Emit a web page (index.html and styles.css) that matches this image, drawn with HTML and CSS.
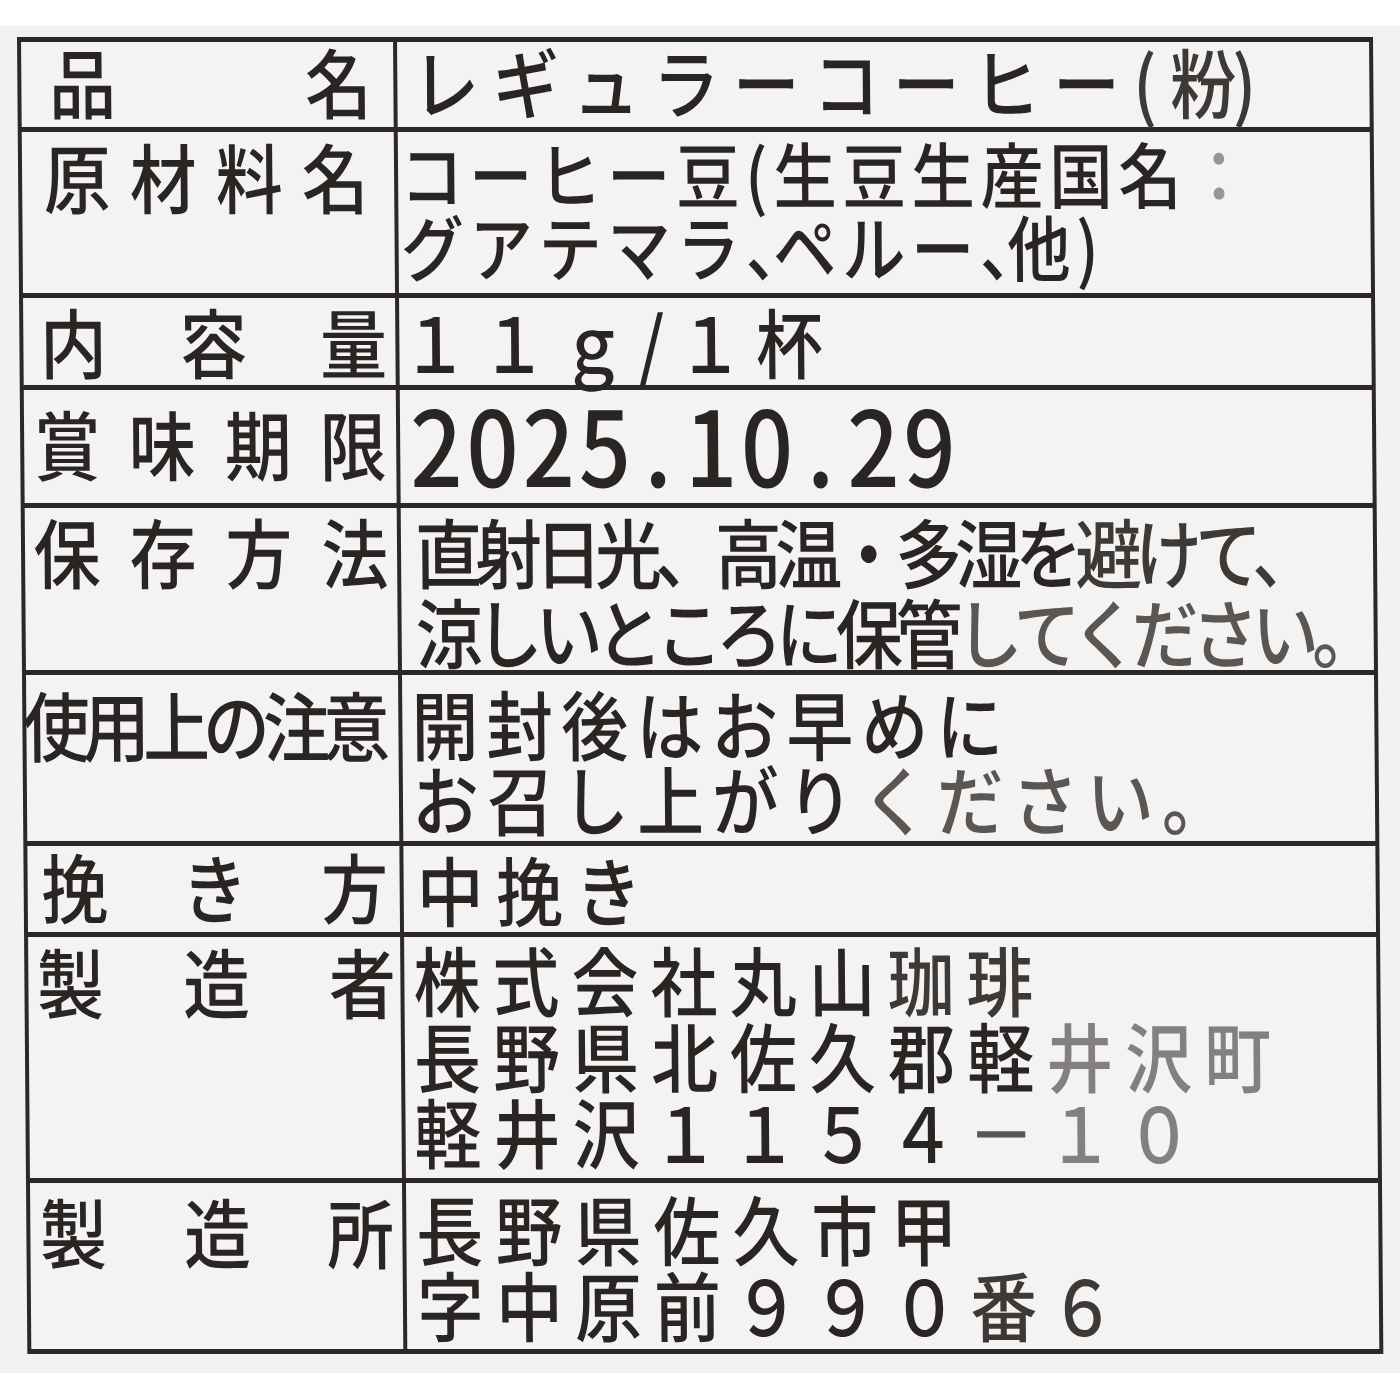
FILE: index.html
```html
<!DOCTYPE html>
<html lang="ja">
<head>
<meta charset="utf-8">
<title>一括表示</title>
<link rel="stylesheet" href="styles.css">
</head>
<body>
<main class="panel">
  <div class="sheet">
    <div class="key k1"><span>品</span><span>名</span></div>
    <div class="val v1"><p class="ln">レギュラーコーヒー<span class="soft">(<span class="snug">粉</span>)</span></p></div>

    <div class="key k2"><span>原</span><span>材</span><span>料</span><span>名</span></div>
    <div class="val v2">
      <p class="ln">コーヒー豆(生豆生産国名<span class="faint">：</span></p>
      <p class="ln">グアテマラ<span class="hw">、</span>ペルー<span class="hw">、</span>他)</p>
    </div>

    <div class="key k3"><span>内</span><span>容</span><span>量</span></div>
    <div class="val v3"><p class="ln">１１ｇ<span class="slash">/</span>１杯</p></div>

    <div class="key k4"><span>賞</span><span>味</span><span>期</span><span>限</span></div>
    <div class="val v4"><p class="ln">2025<span class="dot">.</span>10<span class="dot">.</span>29</p></div>

    <div class="key k5"><span>保</span><span>存</span><span>方</span><span>法</span></div>
    <div class="val v5">
      <p class="ln">直射日光、高温・多湿を<span class="soft">避けて、</span></p>
      <p class="ln">涼しいところに保管<span class="mid">してください。</span></p>
    </div>

    <div class="key k6"><span>使</span><span>用</span><span>上</span><span>の</span><span>注</span><span>意</span></div>
    <div class="val v6">
      <p class="ln">開封後はお早めに</p>
      <p class="ln">お召し上がり<span class="mid">ください。</span></p>
    </div>

    <div class="key k7"><span>挽</span><span>き</span><span>方</span></div>
    <div class="val v7"><p class="ln">中挽き</p></div>

    <div class="key k8"><span>製</span><span>造</span><span>者</span></div>
    <div class="val v8">
      <p class="ln">株式会社丸山<span class="soft">珈琲</span></p>
      <p class="ln">長野県北佐久郡軽<span class="pale">井沢町</span></p>
      <p class="ln">軽井沢１１５４<span class="mid">－</span><span class="pale">１０</span></p>
    </div>

    <div class="key k9"><span>製</span><span>造</span><span>所</span></div>
    <div class="val v9">
      <p class="ln">長野県佐久市甲</p>
      <p class="ln">字中原前９９０<span class="soft">番６</span></p>
    </div>
  </div>
</main>
</body>
</html>
```

FILE: styles.css
```css
* {
  box-sizing: border-box;
  margin: 0;
  padding: 0;
}

html, body {
  background: #ffffff;
}

body {
  font-family: "Noto Sans CJK JP", "Noto Sans", sans-serif;
  font-weight: 500;
  color: #2a2523;
  height: 1400px;
  overflow: hidden;
}

.panel {
  display: block;
  margin-top: 26px;
  height: 1347px;
  background: #f2f2f2;
  padding: 11px 0 0 17px;
}

.sheet {
  display: grid;
  width: 1356px;
  grid-template-columns: 372px 972px;
  grid-template-rows: 85px 161px 87px 113px 162px 166px 86px 241px 166px;
  gap: 5px 4px;
  padding: 5px 4px;
  background: #2d2826;
  transform: skewX(0.45deg);
  transform-origin: 0 0;
}

.key,
.val {
  background: #f3f3f3;
  overflow: visible;
}

/* left column: characters spread across the cell */
.key {
  display: flex;
  justify-content: space-between;
  align-items: flex-start;
  font-size: 76px;
  line-height: 76px;
}

.key span {
  display: block;
  transform: scaleX(0.88);
}

.k1 { padding: 0 17px 0 23px; }
.k2 { padding: 5px 21px 0 17px; }
.k3 { padding: 4px 4px 0 12px; }
.k4 { padding: 14px 5px 0 5px; }
.k5 { padding: 4px 4px 0 4px; }
.k6 { padding: 10px 13px 0 0; }
.k6 span { margin: 0 -8px; }
.k7 { padding: 1px 7px 0 9px; }
.k8 { padding: 5px 0 0 4px; }
.k9 { padding: 9px 4px 0 5px; }

/* right column */
.val {
  font-size: 76px;
}

.ln {
  white-space: nowrap;
  line-height: 76px;
  transform: scaleX(0.88);
  transform-origin: 0 0;
}

.v1 { padding: 0 0 0 15px; }
.v1 .ln { letter-spacing: 15px; }
.snug { letter-spacing: -5px; }

.v2 { padding: 3px 0 0 2px; font-size: 72px; }
.v2 .ln { line-height: 73px; letter-spacing: 6.4px; }
.hw {
  font-feature-settings: "halt";
  letter-spacing: -5px;
}

.v3 { padding: 4px 0 0 2px; }
.v3 .ln { letter-spacing: 13.8px; }
.slash { letter-spacing: 14px; }

.v4 { padding: 0 0 0 10px; font-size: 104px; }
.v4 .ln {
  line-height: 104px;
  letter-spacing: 4.5px;
  font-variant-numeric: tabular-nums;
}
.dot {
  display: inline-block;
  width: 57px;
  text-align: center;
}

.v5 { padding: 2px 0 0 14px; }
.v5 .ln { line-height: 80px; letter-spacing: -7.8px; }

.v6 { padding: 10px 0 0 9px; }
.v6 .ln { line-height: 75px; letter-spacing: 9.2px; }

.v7 { padding: 4px 0 0 13px; }
.v7 .ln { letter-spacing: 14px; }

.v8 { padding: 3px 0 0 9px; }
.v8 .ln { letter-spacing: 13.8px; }

.v9 { padding: 6px 0 0 10px; }
.v9 .ln { letter-spacing: 13.8px; }

/* uneven print density */
.soft { color: #3f3936; }
.mid { color: #5c5653; }
.pale { color: #858080; }
.faint { color: #9a9593; }
```
